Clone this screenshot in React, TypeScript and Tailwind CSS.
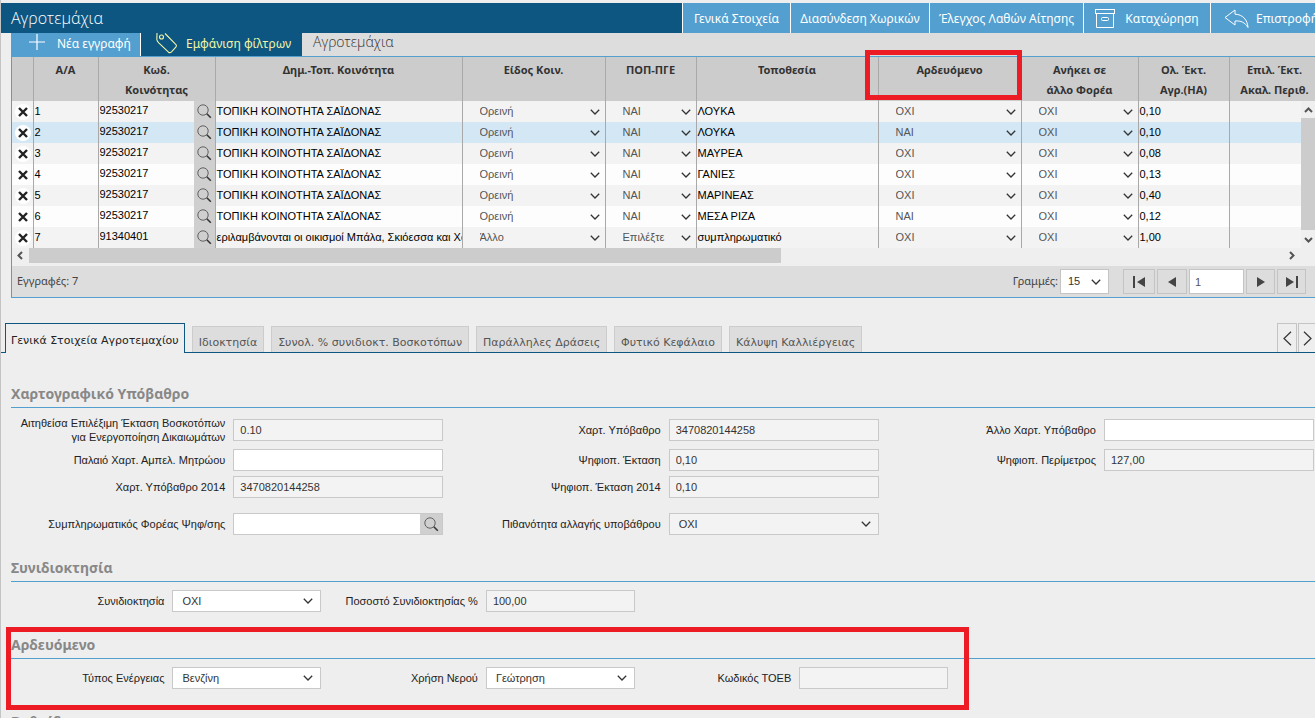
import { useState } from "react";
import type { ReactNode } from "react";

interface Parcel {
  id: number;
  code: string;
  community: string;
  kind: string;
  pop: string;
  place: string;
  irrigated: string;
  otherBody: string;
  area: string;
}

const COMMUNITY = "ΤΟΠΙΚΗ ΚΟΙΝΟΤΗΤΑ ΣΑΪΔΟΝΑΣ";

const parcels: Parcel[] = [
  { id: 1, code: "92530217", community: COMMUNITY, kind: "Ορεινή", pop: "ΝΑΙ", place: "ΛΟΥΚΑ", irrigated: "ΟΧΙ", otherBody: "ΟΧΙ", area: "0,10" },
  { id: 2, code: "92530217", community: COMMUNITY, kind: "Ορεινή", pop: "ΝΑΙ", place: "ΛΟΥΚΑ", irrigated: "ΝΑΙ", otherBody: "ΟΧΙ", area: "0,10" },
  { id: 3, code: "92530217", community: COMMUNITY, kind: "Ορεινή", pop: "ΝΑΙ", place: "ΜΑΥΡΕΑ", irrigated: "ΟΧΙ", otherBody: "ΟΧΙ", area: "0,08" },
  { id: 4, code: "92530217", community: COMMUNITY, kind: "Ορεινή", pop: "ΝΑΙ", place: "ΓΑΝΙΕΣ", irrigated: "ΟΧΙ", otherBody: "ΟΧΙ", area: "0,13" },
  { id: 5, code: "92530217", community: COMMUNITY, kind: "Ορεινή", pop: "ΝΑΙ", place: "ΜΑΡΙΝΕΑΣ", irrigated: "ΟΧΙ", otherBody: "ΟΧΙ", area: "0,40" },
  { id: 6, code: "92530217", community: COMMUNITY, kind: "Ορεινή", pop: "ΝΑΙ", place: "ΜΕΣΑ ΡΙΖΑ", irrigated: "ΝΑΙ", otherBody: "ΟΧΙ", area: "0,12" },
  { id: 7, code: "91340401", community: "εριλαμβάνονται οι οικισμοί Μπάλα, Σκιόεσσα και Χα", kind: "Άλλο", pop: "Επιλέξτε", place: "συμπληρωματικό", irrigated: "ΟΧΙ", otherBody: "ΟΧΙ", area: "1,00" },
];

const headers = [
  "",
  "Α/Α",
  "Κωδ.\nΚοινότητας",
  "Δημ.-Τοπ. Κοινότητα",
  "Είδος Κοιν.",
  "ΠΟΠ-ΠΓΕ",
  "Τοποθεσία",
  "Αρδευόμενο",
  "Ανήκει σε\nάλλο Φορέα",
  "Ολ. Έκτ.\nΑγρ.(HA)",
  "Επιλ. Έκτ.\nΑκαλ. Περιθ.",
];

const tabs = [
  "Γενικά Στοιχεία Αγροτεμαχίου",
  "Ιδιοκτησία",
  "Συνολ. % συνιδιοκτ. Βοσκοτόπων",
  "Παράλληλες Δράσεις",
  "Φυτικό Κεφάλαιο",
  "Κάλυψη Καλλιέργειας",
];

function Chevron() {
  return (
    <svg width="10" height="6" viewBox="0 0 10 6" className="shrink-0 pointer-events-none" fill="none" stroke="#333" strokeWidth="1.3">
      <path d="M0.8 0.8 5 5 9.2 0.8" />
    </svg>
  );
}

function SearchIcon() {
  return (
    <svg width="15" height="15" viewBox="0 0 15 15" fill="none" stroke="#555">
      <circle cx="6" cy="6" r="5.2" strokeWidth="0.9" />
      <path d="M9.8 9.8 13.8 13.8" stroke="#333" strokeWidth="1.6" />
    </svg>
  );
}

function CellSelect({ value, label }: { value: string; label: string }) {
  return (
    <div className="flex items-center pr-[5px]">
      <select aria-label={label} defaultValue={value} className="appearance-none flex-1 min-w-0 h-5 pl-[17px] text-[#555] outline-none">
        <option>{value}</option>
      </select>
      <Chevron />
    </div>
  );
}

const fieldBox = "h-[22px] border border-[#c9c9c9] flex items-center shrink-0";

interface FieldProps {
  id: string;
  label: ReactNode;
  value?: string;
  kind?: "text" | "select" | "search";
  disabled?: boolean;
  narrow?: boolean;
}

function Field({ id, label, value = "", kind = "text", disabled, narrow }: FieldProps) {
  const width = narrow ? "w-[149px]" : "w-[210px]";
  const bg = disabled ? "bg-[#f3f3f3]" : "bg-white";
  return (
    <div className="flex items-center justify-end gap-2">
      <label htmlFor={id} className="text-right leading-[14px] text-[#222]">
        {label}
      </label>
      <div className={`${fieldBox} ${width} ${bg}`}>
        {kind === "select" ? (
          <>
            <select id={id} defaultValue={value} className="appearance-none flex-1 min-w-0 h-5 pl-[9px] text-[#333] outline-none">
              <option>{value}</option>
            </select>
            <span className="pr-[7px]">
              <Chevron />
            </span>
          </>
        ) : (
          <input id={id} defaultValue={value} readOnly={disabled} className="flex-1 min-w-0 h-5 px-[6px] text-[#333] outline-none" />
        )}
        {kind === "search" && (
          <button aria-label="Αναζήτηση" className="w-[22px] h-5 bg-[#cfcfcf] flex items-center justify-center">
            <SearchIcon />
          </button>
        )}
      </div>
    </div>
  );
}

function SectionTitle({ children }: { children: ReactNode }) {
  return (
    <h2 className="ml-[10px] h-7 border-b border-[#539fd0] font-['Noto_Sans',sans-serif] text-sm leading-7 font-bold text-[#888]">
      {children}
    </h2>
  );
}

const headerButton = "h-full border-l border-white bg-[#539fd0] pt-px text-white flex items-center justify-center shrink-0 whitespace-nowrap";
const pagerButton = "h-[25px] border border-[#c4c4c4] flex items-center justify-center";

export default function App() {
  const [selected, setSelected] = useState(2);
  const [activeTab, setActiveTab] = useState(0);

  return (
    <div className="relative h-screen overflow-hidden border-l border-[#c4c4c4] bg-[#eee] pt-[3px] font-['Liberation_Sans',Arial,sans-serif] text-[11px] text-black">
      <header className="flex h-[30px] bg-[#0d5682] font-['Noto_Sans',sans-serif] text-xs">
        <h1 className="flex-1 min-w-0 pl-[10px] font-['Open_Sans',sans-serif] text-base leading-[30px] font-light text-white">Αγροτεμάχια</h1>
        <button className={`${headerButton} w-[108px]`}>Γενικά Στοιχεία</button>
        <button className={`${headerButton} w-[139px]`}>Διασύνδεση Χωρικών</button>
        <button className={`${headerButton} w-[154px]`}>Έλεγχος Λαθών Αίτησης</button>
        <button className={`${headerButton} w-[127px] gap-[10px]`}>
          <svg width="20" height="19" viewBox="0 0 20 19" fill="none" stroke="white">
            <rect x="0.5" y="0.5" width="19" height="4" />
            <path d="M1.5 4.5v14h17v-14" />
            <rect x="6.5" y="8.5" width="7" height="3" rx="1" />
          </svg>
          Καταχώρηση
        </button>
        <button className="h-full w-[105px] shrink-0 border-l border-white bg-[#539fd0] pt-px pl-[13px] text-white flex items-center gap-[7px] overflow-hidden whitespace-nowrap">
          <svg width="25" height="20" viewBox="0 0 25 20" fill="none" stroke="white" className="shrink-0">
            <path d="M11 1 1 8.500 11 16V12C17 11.500 21 13.500 24 18.500 23.500 11 19 5.500 11 5.200Z" />
          </svg>
          Επιστροφή
        </button>
      </header>

      <section className="ml-[10px] border-l border-b border-[#539fd0]">
        <div className="flex h-6 border-b border-[#539fd0] bg-[#ddd] font-['Noto_Sans',sans-serif] text-xs">
          <button className="flex w-[129px] items-start border-r border-white bg-[#539fd0] pl-4 text-white">
            <svg width="18" height="18" viewBox="0 0 18 18" stroke="white" strokeWidth="1.2">
              <path d="M9 1V17M1 9H17" />
            </svg>
            <span className="pl-[11px] leading-[22px]">Νέα εγγραφή</span>
          </button>
          <button className="flex w-[161px] items-start bg-[#0d5682] pl-[15px] text-[#f3f5a5]">
            <svg width="22" height="21" viewBox="0 0 22 21" fill="none" stroke="currentColor" strokeWidth="1.1">
              <path d="M1 0 0.800 6.500C1 8 2 9.200 3 10.200L12.500 19.200C13.500 20 14.500 19.800 15.500 18.800L19.800 14.200C20.800 13 20.600 12.200 19.500 11.200L9 0.500" />
              <circle cx="5.500" cy="4" r="2" />
            </svg>
            <span className="pl-2 leading-[22px]">Εμφάνιση φίλτρων</span>
          </button>
          <span className="pl-[11px] font-['Open_Sans',sans-serif] text-sm leading-[18px] font-light text-[#333]">Αγροτεμάχια</span>
        </div>

        <div className="relative overflow-hidden">
          <table className="w-[1308px] table-fixed border-collapse">
            <colgroup>
              <col className="w-[21px]" />
              <col className="w-[65px]" />
              <col className="w-[117px]" />
              <col className="w-[247px]" />
              <col className="w-[143px]" />
              <col className="w-[91px]" />
              <col className="w-[182px]" />
              <col className="w-[143px]" />
              <col className="w-[117px]" />
              <col className="w-[91px]" />
              <col className="w-[91px]" />
            </colgroup>
            <thead>
              <tr className="h-11 bg-[#ccc] font-['Noto_Sans',sans-serif]">
                {headers.map((h, i) => (
                  <th key={i} className="border-r border-[#a9a9a9] px-1 pt-[3px] align-top text-[11px] leading-5 font-bold whitespace-pre-line text-[#333]">
                    {h}
                  </th>
                ))}
              </tr>
            </thead>
            <tbody>
              {parcels.map((p) => (
                <tr
                  key={p.id}
                  onClick={() => setSelected(p.id)}
                  className={`h-[21px] *:border-r *:border-[#a9a9a9] *:p-0 ${p.id === selected ? "bg-[#d3e7f5]" : "odd:bg-[#f3f3f3] even:bg-[#fdfdfd]"}`}
                >
                  <td>
                    <button aria-label="Διαγραφή" className="ml-[3px] flex size-4 items-center justify-center rounded-full bg-white">
                      <svg width="10" height="10" viewBox="0 0 10 10" stroke="#222" strokeWidth="2.4">
                        <path d="M1 1 9 9M9 1 1 9" />
                      </svg>
                    </button>
                  </td>
                  <td>
                    <span className="pl-px">{p.id}</span>
                  </td>
                  <td>
                    <div className="flex h-[21px]">
                      <input aria-label="Κωδ. Κοινότητας" defaultValue={p.code} className="h-[18px] min-w-0 flex-1 pl-px outline-none" />
                      <button aria-label="Αναζήτηση" className="flex w-[21px] items-center justify-center bg-[#cfcfcf]">
                        <SearchIcon />
                      </button>
                    </div>
                  </td>
                  <td className="overflow-hidden whitespace-nowrap">
                    <span className="pl-px">{p.community}</span>
                  </td>
                  <td>
                    <CellSelect label="Είδος Κοιν." value={p.kind} />
                  </td>
                  <td>
                    <CellSelect label="ΠΟΠ-ΠΓΕ" value={p.pop} />
                  </td>
                  <td>
                    <span className="pl-px">{p.place}</span>
                  </td>
                  <td>
                    <CellSelect label="Αρδευόμενο" value={p.irrigated} />
                  </td>
                  <td>
                    <CellSelect label="Ανήκει σε άλλο Φορέα" value={p.otherBody} />
                  </td>
                  <td>
                    <span className="pl-px">{p.area}</span>
                  </td>
                  <td />
                </tr>
              ))}
            </tbody>
          </table>

          {/* vertical scrollbar */}
          <div className="absolute top-11 right-0 bottom-0 flex w-[14px] flex-col items-center bg-[#efefef]">
            <svg width="14" height="17" viewBox="0 0 14 17" fill="none" stroke="#555" strokeWidth="2">
              <path d="M4 11 7.500 7.500 11 11" />
            </svg>
            <div className="w-full flex-1 bg-[#ccc]" />
            <svg width="14" height="18" viewBox="0 0 14 18" fill="none" stroke="#555" strokeWidth="2">
              <path d="M4 8 7.500 11.500 11 8" />
            </svg>
          </div>
        </div>

        {/* horizontal scrollbar */}
        <div className="flex h-[18px] bg-[#efefef] pb-[3px]">
          <svg width="17" height="15" viewBox="0 0 17 15" fill="none" stroke="#555" strokeWidth="2">
            <path d="M10 4 6.500 7.500 10 11" />
          </svg>
          <div className="flex-1">
            <div className="h-full w-[60%] bg-[#ccc]" />
          </div>
          <svg width="32" height="15" viewBox="0 0 32 15" fill="none" stroke="#555" strokeWidth="2">
            <path d="M7 4 10.500 7.500 7 11" />
          </svg>
        </div>

        <div className="flex h-[31px] items-center gap-[2px] bg-[#ddd] pr-[9px] pl-[5px]">
          <span className="flex-1 font-['Noto_Sans',sans-serif] text-[#444]">Εγγραφές: 7</span>
          <label htmlFor="page-rows" className="font-['Noto_Sans',sans-serif] text-[#444]">
            Γραμμές:
          </label>
          <div className="mr-3 flex h-[25px] w-[49px] items-center border border-[#c4c4c4] bg-white pr-[7px]">
            <select id="page-rows" defaultValue="15" className="h-5 min-w-0 flex-1 appearance-none pl-[7px] text-[#333] outline-none">
              <option>15</option>
            </select>
            <Chevron />
          </div>
          <button aria-label="Πρώτη σελίδα" className={`${pagerButton} w-8`}>
            <svg width="12" height="12" viewBox="0 0 12 12" fill="#444">
              <path d="M0 0h2v12H0zM12 1v10L4 6z" />
            </svg>
          </button>
          <button aria-label="Προηγούμενη σελίδα" className={`${pagerButton} w-[30px]`}>
            <svg width="8" height="10" viewBox="0 0 8 10" fill="#444">
              <path d="M8 0v10L0 5z" />
            </svg>
          </button>
          <input aria-label="Σελίδα" defaultValue="1" className="h-[25px] w-[55px] border border-[#c4c4c4] bg-white px-[5px] text-[#555] outline-none" />
          <button aria-label="Επόμενη σελίδα" className={`${pagerButton} w-[29px]`}>
            <svg width="8" height="10" viewBox="0 0 8 10" fill="#444">
              <path d="M0 0v10L8 5z" />
            </svg>
          </button>
          <button aria-label="Τελευταία σελίδα" className={`${pagerButton} w-[29px]`}>
            <svg width="12" height="12" viewBox="0 0 12 12" fill="#444">
              <path d="M10 0h2v12h-2zM0 1v10L8 6z" />
            </svg>
          </button>
        </div>
      </section>

      <nav className="mt-[25px] flex h-[30px] pl-1 font-['DejaVu_Sans',sans-serif] text-[11px] shadow-[inset_0_-1px_0_#0d5682]">
        <div className="flex flex-1 items-end gap-[7px]">
          {tabs.map((tab, i) => (
            <button
              key={tab}
              onClick={() => setActiveTab(i)}
              className={
                i === activeTab
                  ? "h-[30px] border border-b-0 border-[#0d5682] bg-[#eee] px-[5px] pt-[6px] text-[#222]"
                  : "mb-px h-[26px] border border-b-0 border-[#ccc] bg-[#ddd] px-[6px] pt-2 text-[#555]"
              }
            >
              {tab}
            </button>
          ))}
        </div>
        <div className="flex gap-px pb-px">
          <button aria-label="Προηγούμενη καρτέλα" className="flex w-5 items-center justify-center border border-b-0 border-[#c4c4c4]">
            <svg width="9" height="15" viewBox="0 0 9 15" fill="none" stroke="#333" strokeWidth="1.2">
              <path d="M8 0.800 1 7.500 8 14.200" />
            </svg>
          </button>
          <button aria-label="Επόμενη καρτέλα" className="flex w-[17px] items-center justify-center border border-r-0 border-b-0 border-[#c4c4c4]">
            <svg width="9" height="15" viewBox="0 0 9 15" fill="none" stroke="#333" strokeWidth="1.2">
              <path d="M1 0.800 8 7.500 1 14.200" />
            </svg>
          </button>
        </div>
      </nav>

      <main className="pt-[27px]">
        <SectionTitle>Χαρτογραφικό Υπόβαθρο</SectionTitle>
        <div className="flex flex-col gap-[5px] pt-2 pr-px pb-[19px] pl-[7px]">
          <div className="grid grid-cols-3">
            <Field
              id="requested-area"
              label={
                <>
                  Αιτηθείσα Επιλέξιμη Έκταση Βοσκοτόπων
                  <br />
                  για Ενεργοποίηση Δικαιωμάτων
                </>
              }
              value="0.10"
              disabled
            />
            <Field id="map-sheet" label="Χαρτ. Υπόβαθρο" value="3470820144258" disabled />
            <Field id="other-map-sheet" label="Άλλο Χαρτ. Υπόβαθρο" />
          </div>
          <div className="grid grid-cols-3">
            <Field id="old-vineyard-sheet" label="Παλαιό Χαρτ. Αμπελ. Μητρώου" />
            <Field id="digital-area" label="Ψηφιοπ. Έκταση" value="0,10" disabled />
            <Field id="digital-perimeter" label="Ψηφιοπ. Περίμετρος" value="127,00" disabled />
          </div>
          <div className="grid grid-cols-3">
            <Field id="map-sheet-2014" label="Χαρτ. Υπόβαθρο 2014" value="3470820144258" disabled />
            <Field id="digital-area-2014" label="Ψηφιοπ. Έκταση 2014" value="0,10" disabled />
          </div>
          <div className="grid grid-cols-3 pt-[10px]">
            <Field id="digitising-body" label="Συμπληρωματικός Φορέας Ψηφ/σης" kind="search" />
            <Field id="sheet-change" label="Πιθανότητα αλλαγής υποβάθρου" value="ΟΧΙ" kind="select" disabled />
          </div>
        </div>

        <SectionTitle>Συνιδιοκτησία</SectionTitle>
        <div className="grid grid-cols-[24%_24%_24%] pt-2 pr-px pb-[19px] pl-[7px]">
          <Field id="co-ownership" label="Συνιδιοκτησία" value="ΟΧΙ" kind="select" narrow />
          <Field id="co-ownership-share" label="Ποσοστό Συνιδιοκτησίας %" value="100,00" disabled narrow />
        </div>

        <SectionTitle>Αρδευόμενο</SectionTitle>
        <div className="grid grid-cols-[24%_24%_24%] pt-2 pr-px pb-[19px] pl-[7px]">
          <Field id="energy-type" label="Τύπος Ενέργειας" value="Βενζίνη" kind="select" narrow />
          <Field id="water-use" label="Χρήση Νερού" value="Γεώτρηση" kind="select" narrow />
          <Field id="toeb-code" label="Κωδικός ΤΟΕΒ" disabled narrow />
        </div>

        <SectionTitle>Βαθμίδες</SectionTitle>
      </main>

      {/* red highlight frames over the irrigation column and section */}
      <div className="pointer-events-none absolute top-[50px] left-[864px] h-[50px] w-[157px] border-[5px] border-[#ed1c24]" />
      <div className="pointer-events-none absolute top-[627px] left-[5px] h-[83px] w-[963px] border-[5px] border-[#ed1c24]" />
    </div>
  );
}
